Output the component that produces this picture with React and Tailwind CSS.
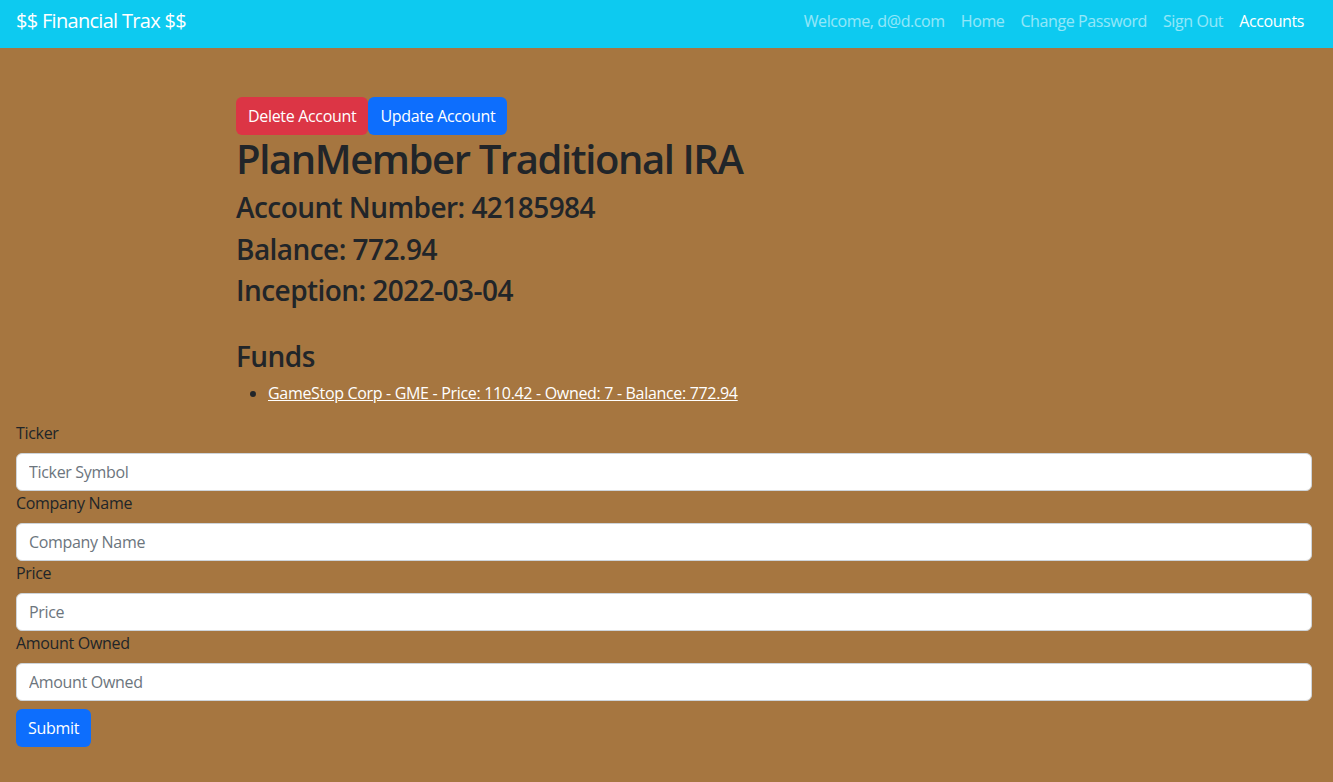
export default function App() {
  const font = { fontFamily: '"Open Sans", "Noto Sans", "Liberation Sans", sans-serif' };
  const fields = [
    ["Ticker", "Ticker Symbol"],
    ["Company Name", "Company Name"],
    ["Price", "Price"],
    ["Amount Owned", "Amount Owned"],
  ];
  return (
    <div className="min-h-[782px] bg-[#a67640] text-[#212529] tracking-[-0.02em]" style={font}>
      <nav className="h-12 bg-[#0dcaf0] flex items-center justify-between pl-4 pr-[21px] pb-[6px]">
        <span className="text-white text-[20px] leading-[30px] tracking-[-0.035em]">$$ Financial Trax $$</span>
        <div className="flex text-[16px] leading-6 tracking-[-0.025em]">
          <span className="px-2 text-white/55">Welcome, d@d.com</span>
          <span className="px-2 text-white/55">Home</span>
          <span className="px-2 text-white/55">Change Password</span>
          <span className="px-2 text-white/55">Sign Out</span>
          <span className="px-2 text-white">Accounts</span>
        </div>
      </nav>
      <div className="pl-[236px] pt-[49px]">
        <div className="flex">
          <button className="h-[38px] px-3 rounded-md bg-[#dc3545] text-white text-[16px]">Delete Account</button>
          <button className="h-[38px] px-3 rounded-md bg-[#0d6efd] text-white text-[16px]">Update Account</button>
        </div>
        <h1 className="text-[40px] leading-[48px] font-semibold tracking-[-0.035em] mb-2">PlanMember Traditional IRA</h1>
        <h3 className="text-[28px] leading-[33.6px] font-semibold tracking-[-0.02em] mb-2">Account Number: 42185984</h3>
        <h3 className="text-[28px] leading-[33.6px] font-semibold tracking-[-0.02em] mb-2">Balance: 772.94</h3>
        <h3 className="text-[28px] leading-[33.6px] font-semibold tracking-[-0.02em] mb-2">Inception: 2022-03-04</h3>
        <h3 className="text-[28px] leading-[33.6px] font-semibold tracking-[-0.02em] mb-2 mt-8">Funds</h3>
        <ul className="list-disc pl-8 mb-4 text-[16px] leading-6">
          <li><a className="text-white underline" href="#">GameStop Corp - GME - Price: 110.42 - Owned: 7 - Balance: 772.94</a></li>
        </ul>
      </div>
      <form className="pl-4 pr-[21px] pb-8 text-[16px] leading-6">
        {fields.map(([label, ph]) => (
          <div key={label}>
            <label className="block mb-2">{label}</label>
            <input
              className="block w-full h-[38px] px-3 bg-white border border-[#ced4da] rounded-md placeholder:text-[#6c757d] outline-none"
              placeholder={ph}
            />
          </div>
        ))}
        <button type="button" className="mt-2 h-[38px] px-3 rounded-md bg-[#0d6efd] text-white">Submit</button>
      </form>
    </div>
  );
}
